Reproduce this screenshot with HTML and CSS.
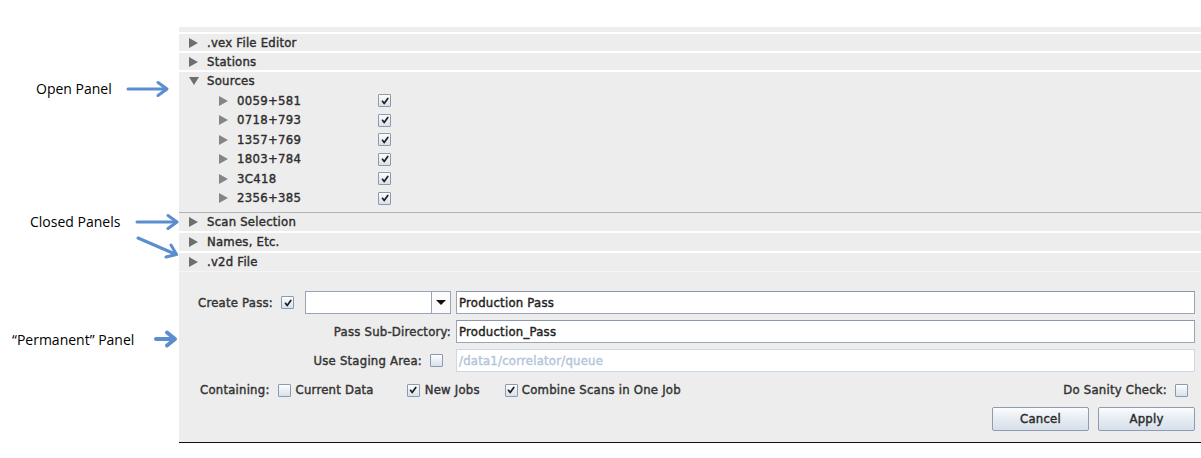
FILE: index.html
```html
<!DOCTYPE html>
<html>
<head>
<meta charset="utf-8">
<title>Panels</title>
<link rel="stylesheet" href="styles.css">
</head>
<body>
<div class="page">
  <div class="notes">
    <span class="note note-open">Open Panel</span>
    <span class="note note-closed">Closed Panels</span>
    <span class="note note-perm">“Permanent” Panel</span>
    <svg class="arrows" width="179" height="458" viewBox="0 0 179 458">
      <g fill="none" stroke="#5b8dcf" stroke-linecap="round" stroke-linejoin="round">
        <path d="M128 89 H166" stroke-width="3"/>
        <path d="M158 82.5 L167 89 L158 95.5" stroke-width="3"/>
        <path d="M137 222 H176" stroke-width="3"/>
        <path d="M168 215.5 L177 222 L168 228.5" stroke-width="3"/>
        <path d="M138 238 L175 254" stroke-width="3"/>
        <path d="M171 245 L176.5 254.5 L166 257" stroke-width="3"/>
        <path d="M156 339 H172" stroke-width="4"/>
        <path d="M167 332.5 L175 339 L167 345.5" stroke-width="4"/>
      </g>
    </svg>
  </div>

  <div class="panel">
    <div class="stub"></div>
    <div class="hdr"><i class="tri"></i><span>.vex File Editor</span></div>
    <div class="hdr"><i class="tri"></i><span>Stations</span></div>
    <div class="section">
      <div class="hdr hdr-open"><i class="tri tri-down"></i><span>Sources</span></div>
      <div class="children">
        <div class="child"><i class="tri tri-small"></i><span class="child-name">0059+581</span><span class="cb"><svg viewBox="0 0 8 8"><path d="M1.5 4.3 L3.2 6.6 L6.8 1.4"/></svg></span></div>
        <div class="child"><i class="tri tri-small"></i><span class="child-name">0718+793</span><span class="cb"><svg viewBox="0 0 8 8"><path d="M1.5 4.3 L3.2 6.6 L6.8 1.4"/></svg></span></div>
        <div class="child"><i class="tri tri-small"></i><span class="child-name">1357+769</span><span class="cb"><svg viewBox="0 0 8 8"><path d="M1.5 4.3 L3.2 6.6 L6.8 1.4"/></svg></span></div>
        <div class="child"><i class="tri tri-small"></i><span class="child-name">1803+784</span><span class="cb"><svg viewBox="0 0 8 8"><path d="M1.5 4.3 L3.2 6.6 L6.8 1.4"/></svg></span></div>
        <div class="child"><i class="tri tri-small"></i><span class="child-name">3C418</span><span class="cb"><svg viewBox="0 0 8 8"><path d="M1.5 4.3 L3.2 6.6 L6.8 1.4"/></svg></span></div>
        <div class="child"><i class="tri tri-small"></i><span class="child-name">2356+385</span><span class="cb"><svg viewBox="0 0 8 8"><path d="M1.5 4.3 L3.2 6.6 L6.8 1.4"/></svg></span></div>
      </div>
    </div>
    <div class="hdr hdr-tall hdr-first"><i class="tri"></i><span>Scan Selection</span></div>
    <div class="hdr hdr-tall"><i class="tri"></i><span>Names, Etc.</span></div>
    <div class="hdr hdr-tall"><i class="tri"></i><span>.v2d File</span></div>

    <div class="perm">
      <div class="form-grid">
        <div class="lead lead-start">
          <span class="lbl">Create Pass:</span>
          <span class="cb cb-gap"><svg viewBox="0 0 8 8"><path d="M1.5 4.3 L3.2 6.6 L6.8 1.4"/></svg></span>
          <div class="combo">
            <div class="combo-text"></div>
            <div class="combo-btn"><i class="combo-arrow"></i></div>
          </div>
        </div>
        <div class="field">Production Pass</div>

        <div class="lead lead-end">
          <span class="lbl">Pass Sub-Directory:</span>
        </div>
        <div class="field">Production_Pass</div>

        <div class="lead lead-end">
          <span class="lbl">Use Staging Area:</span>
          <span class="cb cb-gap cb-end"></span>
        </div>
        <div class="field field-disabled">/data1/correlator/queue</div>
      </div>

      <div class="contain-row">
        <span class="lbl">Containing:</span>
        <span class="cb cb-gap"></span>
        <span class="opt">Current Data</span>
        <span class="cb cb-far"><svg viewBox="0 0 8 8"><path d="M1.5 4.3 L3.2 6.6 L6.8 1.4"/></svg></span>
        <span class="opt">New Jobs</span>
        <span class="cb cb-mid"><svg viewBox="0 0 8 8"><path d="M1.5 4.3 L3.2 6.6 L6.8 1.4"/></svg></span>
        <span class="opt opt-tight">Combine Scans in One Job</span>
        <span class="spacer"></span>
        <span class="lbl">Do Sanity Check:</span>
        <span class="cb cb-gap cb-last"></span>
      </div>

      <div class="btn-row">
        <button class="btn" type="button">Cancel</button>
        <button class="btn" type="button">Apply</button>
      </div>
    </div>
  </div>
</div>
</body>
</html>
```
FILE: styles.css
```css
* {
  box-sizing: border-box;
}

body {
  margin: 0;
  background: #ffffff;
  font-family: "DejaVu Sans", "Noto Sans", sans-serif;
}

.page {
  display: flex;
  align-items: flex-start;
  height: 458px;
}

.notes {
  position: relative;
  width: 179px;
  height: 458px;
  flex: none;
}

.note {
  position: absolute;
  font-family: "Open Sans", "Liberation Sans", sans-serif;
  font-size: 14px;
  line-height: 20px;
  color: #000;
  white-space: nowrap;
}

.note-open {
  left: 36px;
  top: 79px;
}

.note-closed {
  left: 30px;
  top: 212px;
}

.note-perm {
  left: 12px;
  top: 330px;
}

.arrows {
  position: absolute;
  left: 0;
  top: 0;
}

.panel {
  flex: 1;
  margin-top: 27px;
  display: flex;
  flex-direction: column;
  font-size: 11.7px;
  letter-spacing: 0.22px;
  color: #333;
  -webkit-text-stroke: 0.4px currentColor;
}

.stub {
  height: 5px;
  background: #ededed;
}

.hdr {
  height: 17px;
  margin-top: 2px;
  background: #ededed;
  display: flex;
  align-items: center;
  padding-left: 10px;
  white-space: nowrap;
  color: #2e2e2e;
}

.hdr-open {
  margin-top: 0;
  padding-top: 1px;
}

.hdr-tall {
  height: 18px;
}

.hdr-first {
  margin-top: 0;
}

.tri {
  width: 0;
  height: 0;
  border-left: 9px solid #6e6e6e;
  border-top: 5px solid transparent;
  border-bottom: 5px solid transparent;
  margin-right: 9px;
  flex: none;
}

.tri-down {
  border-top: 8px solid #6e6e6e;
  border-left: 5px solid transparent;
  border-right: 5px solid transparent;
  border-bottom: 0;
  margin-right: 8px;
}

.tri-small {
  border-left-color: #858585;
}

.section {
  margin-top: 2px;
  background: #ededed;
}

.children {
  padding: 2px 0 4px;
  border-bottom: 1px solid #b3b3b3;
}

.child {
  height: 19.5px;
  display: flex;
  align-items: center;
  padding-left: 40px;
  color: #2e2e2e;
}

.child-name {
  width: 141px;
  letter-spacing: 0.3px;
}

.cb {
  width: 13px;
  height: 13px;
  border: 1px solid #8c9aae;
  border-radius: 1px;
  background: linear-gradient(#fdfdfe, #d8e1eb);
  display: inline-flex;
  align-items: center;
  justify-content: center;
  flex: none;
  -webkit-text-stroke: 0;
}

.cb svg {
  width: 8px;
  height: 8px;
  fill: none;
  stroke: #1e1e1e;
  stroke-width: 1.7;
  stroke-linecap: round;
  stroke-linejoin: round;
}

.perm {
  background: #ededed;
  border-top: 1px solid #f5f5f5;
  border-bottom: 1px solid #111;
  padding: 19px 6px 11px 19px;
}

.form-grid {
  display: grid;
  grid-template-columns: 253px 1fr;
  grid-auto-rows: 23px;
  column-gap: 5px;
  row-gap: 6px;
}

.lead {
  display: flex;
  align-items: center;
  white-space: nowrap;
}

.lead-end {
  justify-content: flex-end;
}

.lbl {
  color: #333;
  white-space: nowrap;
}

.cb-gap {
  margin-left: 8px;
}

.cb-end {
  margin-right: 8px;
}

.combo {
  margin-left: 11px;
  width: 146px;
  height: 23px;
  display: flex;
  border: 1px solid #98a5b8;
  background: #fff;
}

.combo-text {
  flex: 1;
  border-right: 1px solid #98a5b8;
}

.combo-btn {
  width: 18px;
  display: flex;
  align-items: center;
  justify-content: center;
  background: #fbfbfb;
}

.combo-arrow {
  width: 0;
  height: 0;
  border-top: 5px solid #111;
  border-left: 5px solid transparent;
  border-right: 5px solid transparent;
}

.field {
  height: 23px;
  border: 1px solid #9aa6b8;
  border-top-color: #8c98ab;
  background: #fff;
  padding: 0 2px;
  display: flex;
  align-items: center;
  color: #222;
  white-space: nowrap;
}

.field-disabled {
  border-color: #cbd8e8;
  color: #b3c5db;
}

.contain-row {
  margin-top: 10px;
  height: 16px;
  display: flex;
  align-items: center;
  padding-left: 2px;
  white-space: nowrap;
}

.opt {
  margin-left: 5px;
  color: #333;
}

.opt-tight {
  margin-left: 4px;
}

.cb-far {
  margin-left: 33px;
}

.cb-mid {
  margin-left: 25px;
}

.spacer {
  flex: 1;
}

.cb-last {
  margin-left: 8px;
  margin-right: 7px;
}

.btn-row {
  margin-top: 9px;
  display: flex;
  justify-content: flex-end;
  gap: 9px;
}

.btn {
  width: 97px;
  height: 24px;
  border: 1px solid #8e9bb0;
  border-radius: 2px;
  background: linear-gradient(#fbfcfd, #e6ecf2 50%, #d6e0eb);
  font-family: inherit;
  font-size: 11.7px;
  letter-spacing: 0.22px;
  color: #2a2a2a;
  -webkit-text-stroke: 0.4px currentColor;
  padding: 0;
}
```
